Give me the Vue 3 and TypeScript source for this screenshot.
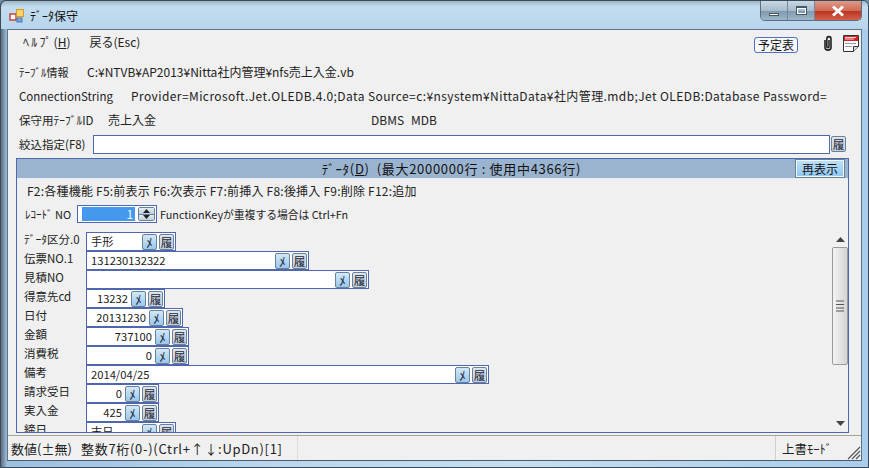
<script setup lang="ts">
interface Field { label: string; value: string; width: number; right?: boolean; input: number }
const fields: Field[] = [
  { label: 'ﾃﾞｰﾀ区分.0', value: '手形', width: 90, input: 55 },
  { label: '伝票NO.1', value: '131230132322', width: 223, input: 188 },
  { label: '見積NO', value: '', width: 283, input: 248 },
  { label: '得意先cd', value: '13232', width: 79, input: 44, right: true },
  { label: '日付', value: '20131230', width: 97, input: 62, right: true },
  { label: '金額', value: '737100', width: 103, input: 68, right: true },
  { label: '消費税', value: '0', width: 103, input: 68, right: true },
  { label: '備考', value: '2014/04/25', width: 403, input: 368 },
  { label: '請求受日', value: '0', width: 73, input: 38, right: true },
  { label: '実入金', value: '425', width: 73, input: 38, right: true },
  { label: '締日', value: '末日', width: 90, input: 55 },
]
</script>

<template>
  <div class="window">
    <header class="titlebar">
      <svg class="app-icon" width="16" height="16" viewBox="0 0 16 16">
        <rect x="1" y="6" width="6" height="6" fill="#fff" stroke="#c0392b" stroke-width="1.4" />
        <rect x="7.5" y="1.5" width="7" height="7" fill="#f6d365" stroke="#d99a1c" />
        <rect x="8" y="10" width="5" height="4" fill="#7aa6dc" stroke="#4a78b8" />
      </svg>
      <span class="title">ﾃﾞｰﾀ保守</span>
      <div class="caption">
        <button class="cap cap-min"><i></i></button>
        <button class="cap cap-max"><i></i></button>
        <button class="cap cap-close">
          <svg width="14" height="12" viewBox="0 0 14 12"><path d="M2 1.5 L12 10.5 M12 1.5 L2 10.5" stroke="#fff" stroke-width="3" /></svg>
        </button>
      </div>
    </header>

    <main class="client">
      <nav class="menu">
        <span class="menu-item first"><span class="kana">ﾍﾙﾌﾟ</span>(<u>H</u>)</span>
        <span class="menu-item">戻る(Esc)</span>
        <span class="spacer"></span>
        <button class="schedule">予定表</button>
        <svg class="clip" width="12" height="17" viewBox="0 0 12 17">
          <path d="M3 5 V12.5 C3 16 9 16 9 12.5 V4 C9 0.8 4.8 0.8 4.8 4 V11.5 C4.8 13 7 13 7 11.5 V5" fill="none" stroke="#222" stroke-width="1.6" />
        </svg>
        <svg class="memo" width="16" height="17" viewBox="0 0 16 17">
          <path d="M0.5 0.5 H15.5 V11.5 L10.5 16.5 H0.5 Z" fill="#fff" stroke="#333" />
          <rect x="1" y="1" width="14" height="5" fill="#d8232a" />
          <path d="M2 2.5 H13 M2 4 H11" stroke="#fff" stroke-width=".8" />
          <path d="M2 8.5 H13 M2 11.5 H9" stroke="#999" />
          <path d="M10.5 16.5 V11.5 H15.5" fill="#ddd" stroke="#333" />
        </svg>
      </nav>

      <div class="info info-1"><span class="info-label w1">ﾃｰﾌﾞﾙ情報</span><span>C:¥NTVB¥AP2013¥Nitta社内管理¥nfs売上入金.vb</span></div>
      <div class="info info-2"><span class="info-label w2">ConnectionString</span><span class="conn">Provider=Microsoft.Jet.OLEDB.4.0;Data Source=c:¥nsystem¥NittaData¥社内管理.mdb;Jet OLEDB:Database Password=</span></div>
      <div class="info info-3">
        <span class="info-label w3">保守用ﾃｰﾌﾞﾙID</span><span class="w4">売上入金</span>
        <span class="w5">DBMS</span><span>MDB</span>
      </div>

      <div class="filter">
        <span class="filter-label">絞込指定(F8)</span>
        <div class="filter-input"></div>
        <button class="mini">履</button>
      </div>

      <section class="panel">
        <div class="panel-head">
          <span class="panel-title">ﾃﾞｰﾀ(<u>D</u>)&nbsp;&nbsp;(最大2000000行 : 使用中4366行)</span>
          <button class="refresh">再表示</button>
        </div>
        <div class="fkeys">F2:各種機能 F5:前表示 F6:次表示 F7:前挿入 F8:後挿入 F9:削除 F12:追加</div>
        <div class="record">
          <span class="record-label">ﾚｺｰﾄﾞ NO</span>
          <div class="spin">
            <span class="spin-value">1</span>
            <div class="spin-btns">
              <span><svg width="7" height="4" viewBox="0 0 7 4"><path d="M3.5 0 L7 4 H0 Z" fill="#222" /></svg></span>
              <span><svg width="7" height="4" viewBox="0 0 7 4"><path d="M0 0 H7 L3.5 4 Z" fill="#222" /></svg></span>
            </div>
          </div>
          <span class="record-note">FunctionKeyが重複する場合は Ctrl+Fn</span>
        </div>

        <div class="scroll-wrap">
          <div class="rows">
            <div v-for="f in fields" :key="f.label" class="row">
              <span class="row-label">{{ f.label }}</span>
              <div class="field" :style="{ width: f.width + 'px' }">
                <span class="field-value" :class="{ right: f.right }" :style="{ width: f.input + 'px' }">{{ f.value }}</span>
                <button class="mini mini-m">ﾒ</button>
                <button class="mini">履</button>
              </div>
            </div>
          </div>
          <div class="scrollbar">
            <div class="sb-arrow sb-up"><svg width="9" height="5" viewBox="0 0 9 5"><path d="M4.5 0 L9 5 H0 Z" fill="#444" /></svg></div>
            <div class="sb-thumb">
              <svg width="8" height="12" viewBox="0 0 8 12"><path d="M0 1 H8 M0 4.5 H8 M0 8 H8 M0 11 H8" stroke="#555" /></svg>
            </div>
            <div class="sb-track"></div>
            <div class="sb-arrow"><svg width="9" height="5" viewBox="0 0 9 5"><path d="M0 0 H9 L4.5 5 Z" fill="#444" /></svg></div>
          </div>
        </div>
      </section>

      <footer class="status">
        <span class="st-a">数値(±無)</span>
        <span class="st-b">整数7桁(0-)(Ctrl+↑↓:UpDn)[1]</span>
        <span class="st-c"></span>
        <span class="st-d">上書ﾓｰﾄﾞ</span>
        <svg class="grip" width="16" height="16" viewBox="0 0 16 16">
          <path d="M15 3 L3 15 M15 7 L7 15 M15 11 L11 15" stroke="#555" stroke-width="1.2" />
        </svg>
      </footer>
    </main>
  </div>
</template>

<style>
html, body { margin: 0; padding: 0; overflow: hidden; background: #6f8ba6; }
</style>

<style scoped>
.window {
  width: 869px;
  height: 468px;
  box-sizing: border-box;
  display: flex;
  flex-direction: column;
  font-family: "Noto Sans CJK JP", "Noto Sans", sans-serif;
  font-size: 12px;
  color: #222;
  border: 1px solid #3c4a58;
  border-radius: 6px 6px 0 0;
  background: linear-gradient(90deg, #5f6f7e 0, #9cc0e0 6px, #b9d6ee 30%, #c6def1 60%, #a9cdea 100%);
}
.titlebar {
  height: 28px;
  flex: none;
  display: flex;
  align-items: flex-start;
  padding-left: 7px;
  background: linear-gradient(180deg, #9fb8c9 0, #c3dcef 6px, #b7d5ed 100%);
  border-radius: 6px 6px 0 0;
}
.app-icon { margin: 7px 0 0 1px; }
.title { margin: 6px 0 0 5px; font-size: 12px; line-height: 18px; color: #111; }
.caption { margin-left: auto; margin-right: 6px; display: flex; height: 19px; border: 1px solid #5b6f80; border-top: 0; border-radius: 0 0 5px 5px; overflow: hidden; }
.cap { padding: 0; border: 0; display: flex; align-items: center; justify-content: center; height: 19px; }
.cap-min, .cap-max { width: 27px; background: linear-gradient(180deg, #c8d8e5 0, #a8bccc 50%, #7f98ad 52%, #9db6c9 100%); border-right: 1px solid #73899b; }
.cap-min i { width: 10px; height: 3px; margin-top: 7px; background: #fff; border: 1px solid #44586a; box-sizing: border-box; }
.cap-max i { width: 11px; height: 9px; background: transparent; border: 1px solid #44586a; border-top-width: 2px; box-sizing: border-box; box-shadow: inset 0 0 0 1px #fff; }
.cap-close { width: 46px; background: linear-gradient(180deg, #dc9c8c 0, #cf6a55 50%, #b9321f 52%, #d2604a 100%); }

.client {
  flex: 1;
  min-height: 0;
  margin: 0 6px 6px 6px;
  background: #f0f0f0;
  border: 1px solid #5e7286;
  border-bottom-color: #4a5c6e;
  display: flex;
  flex-direction: column;
  box-sizing: border-box;
}
.menu { height: 26px; flex: none; display: flex; align-items: center; }
.menu-item { font-size: 12px; margin-left: 19px; line-height: 26px; transform: translateY(-1px); white-space: nowrap; }
.menu-item.first { margin-left: 15px; }
.kana { letter-spacing: 2.2px; }
.spacer { flex: 1; }
.schedule {
  width: 44px; height: 16px; padding: 0; font: inherit; font-size: 12px; line-height: 14px; color: #111;
  border: 1px solid #4f6fc0; border-radius: 3px; background: #f6f8fc; margin: 4px 24px 0 0;
}
.clip { margin: 1px 9px 0 0; }
.memo { margin: 1px 2px 0 0; }

.info { flex: none; font-size: 12px; height: 24px; line-height: 24px; display: flex; padding-left: 11px; white-space: nowrap; }
.info-1 { margin-top: 4px; }
.info-3 { height: 22px; line-height: 22px; margin-top: 1px; }
.info-label { flex: none; font-size: 11px; }
.info-2 .info-label { font-size: 11.5px; }
.conn { letter-spacing: 0.41px; }
.w1 { width: 68px; }
.w2 { width: 112px; }
.w3 { width: 89px; font-size: 11.5px; }
.w4 { width: 263px; }
.w5 { width: 40px; }

.filter { flex: none; display: flex; align-items: center; height: 20px; margin-top: 3px; padding-left: 11px; }
.filter-label { width: 74px; flex: none; font-size: 11.5px; }
.filter-input { width: 737px; height: 19px; box-sizing: border-box; background: #fff; border: 1px solid #4f67b0; }
.filter .mini { margin-left: 1px; }

.mini {
  width: 15px; height: 16px; padding: 0; flex: none; font: inherit; font-size: 11.5px; line-height: 14px; color: #223;
  box-sizing: border-box; border: 1px solid #6b8195; border-radius: 2px;
  background: linear-gradient(180deg, #dbe6ee, #c0d0dc);
}
.mini-m { background: linear-gradient(180deg, #d2e8f8, #99c8ee); margin-right: 2px; font-size: 13px; }

.panel {
  flex: none;
  height: 275px;
  margin: 4px 0 0 8px;
  width: 833px;
  box-sizing: border-box;
  border: 1px solid #4f67b0;
  display: flex;
  flex-direction: column;
  overflow: hidden;
}
.panel-head {
  height: 20px;
  flex: none;
  display: flex;
  align-items: center;
  justify-content: flex-end;
  background: #9ab4d0;
  border-bottom: 1px solid #e6eef6;
  box-sizing: border-box;
  padding-right: 3px;
  margin-top: 0;
}
.panel-title { margin-right: 214px; font-size: 13px; letter-spacing: 0.68px; color: #111; white-space: nowrap; }
.refresh {
  width: 50px; height: 19px; padding: 0; font: inherit; font-size: 12px; line-height: 16px; color: #111;
  border: 1px solid #6b8195; background: linear-gradient(180deg, #bfe0f8, #8fc6f0);
  box-shadow: inset 0 0 0 1px #eef6fc;
}
.fkeys { flex: none; height: 26px; line-height: 24px; padding-left: 10px; font-size: 12px; letter-spacing: 0.22px; white-space: nowrap; }
.record { flex: none; display: flex; align-items: center; height: 18px; padding-left: 8px; }
.record-label { width: 52px; flex: none; font-size: 11px; }
.spin { width: 80px; height: 18px; box-sizing: border-box; border: 1px solid #4f67b0; background: #fff; display: flex; align-items: stretch; padding: 1px; }
.spin-value { width: 54px; margin-left: 3px; box-sizing: border-box; background: #4499ee; color: #eaf4ff; text-align: right; padding-right: 2px; line-height: 14px; }
.spin-btns { width: 17px; margin-left: 3px; display: flex; flex-direction: column; border: 1px solid #6b8195; border-radius: 2px; overflow: hidden; box-sizing: border-box; }
.spin-btns span { flex: 1; display: flex; align-items: center; justify-content: center; background: linear-gradient(180deg, #e4edf4, #bcd0de); }
.spin-btns span + span { border-top: 1px solid #6b8195; }
.record-note { margin-left: 3px; font-size: 10.8px; white-space: nowrap; }

.scroll-wrap { flex: 1; min-height: 0; display: flex; margin-top: 9px; overflow: hidden; }
.rows { flex: 1; min-width: 0; overflow: hidden; padding-left: 7px; }
.row { height: 19px; display: flex; }
.row-label { width: 62px; flex: none; font-size: 11.5px; line-height: 14px; white-space: nowrap; }
.field {
  height: 19px; box-sizing: border-box; display: flex; align-items: center;
  border: 1px solid #4f67b0; background: #fff; flex: none; padding-right: 1px;
}
.field-value { flex: none; box-sizing: border-box; padding: 0 4px; line-height: 17px; font-size: 11.2px; white-space: nowrap; }
.field-value.right { text-align: right; padding-right: 3px; }

.scrollbar { width: 16px; flex: none; display: flex; flex-direction: column; background: #f0f0f0; }
.sb-arrow { height: 17px; flex: none; display: flex; align-items: center; justify-content: center; }
.sb-up { height: 15px; }
.sb-thumb {
  height: 118px; flex: none; box-sizing: border-box; display: flex; align-items: center; justify-content: center;
  border: 1px solid #9a9a9a; border-radius: 2px;
  background: linear-gradient(90deg, #f4f4f4, #d4d4d4);
}
.sb-track { flex: 1; }

.status {
  flex: none; margin-top: auto; height: 25px; box-sizing: border-box; display: flex; align-items: center;
  border-top: 1px solid #a9a396; font-size: 13px; white-space: nowrap; background: #f0f0f0;
  padding-left: 3px;
}
.st-a { width: 70px; flex: none; }
.st-b { width: 216px; flex: none; letter-spacing: 0.7px; }
.st-c { width: 477px; flex: none; height: 100%; border-left: 1px solid #dcdcdc; border-right: 1px solid #cfcfcf; }
.st-d { margin-left: 6px; font-size: 12.5px; }
.grip { margin-left: auto; align-self: flex-end; }
</style>
